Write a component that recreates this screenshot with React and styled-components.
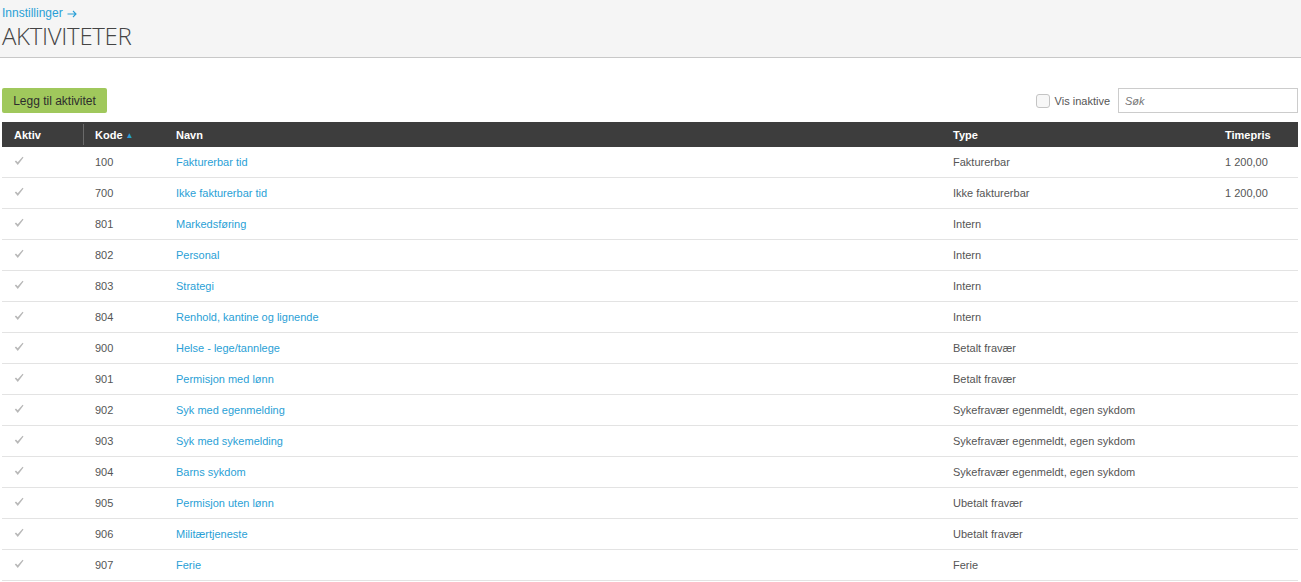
import React from "react";
import styled, { createGlobalStyle } from "styled-components";

const GlobalStyle = createGlobalStyle`
  body {
    margin: 0;
    background: #fff;
    font-family: "Liberation Sans", Arial, sans-serif;
    color: #555;
  }
`;

const Header = styled.div`
  background-color: #f5f5f5;
  border-bottom: 1px solid #c8c8c8;
  height: 58px;
  padding: 0 2px;
  box-sizing: border-box;
`;

const Breadcrumb = styled.a`
  display: flex;
  align-items: center;
  gap: 4px;
  padding-top: 6px;
  font-size: 12px;
  line-height: 15px;
  color: #2a9fd6;
  text-decoration: none;
`;

const Title = styled.h1`
  margin: 0;
  font-family: "Open Sans", sans-serif;
  font-weight: 300;
  font-size: 24px;
  line-height: 30px;
  color: #444;
  letter-spacing: -0.3px;
`;

const Content = styled.div`
  padding: 30px 3px 0 2px;
`;

const Toolbar = styled.div`
  display: flex;
  align-items: center;
  justify-content: space-between;
  height: 25px;
  margin-bottom: 9px;
`;

const AddButton = styled.button`
  height: 25px;
  width: 105px;
  border: none;
  border-radius: 2px;
  background-color: #a0c85c;
  color: #2d2d2d;
  font-family: "Liberation Sans", Arial, sans-serif;
  font-size: 12px;
  cursor: pointer;
  padding: 0;
`;

const RightTools = styled.div`
  display: flex;
  align-items: center;
`;

const CheckLabel = styled.label`
  display: flex;
  align-items: center;
  font-size: 11px;
  color: #555;
  margin-right: 8px;
`;

const Box = styled.span`
  width: 12px;
  height: 12px;
  border: 1px solid #c4c4c4;
  border-radius: 3px;
  background: #f7f7f7;
  margin-right: 5px;
`;

const Search = styled.input`
  width: 180px;
  height: 25px;
  box-sizing: border-box;
  border: 1px solid #ccc;
  padding: 0 6px;
  font-family: "Liberation Sans", Arial, sans-serif;
  font-size: 11px;
  outline: none;
  &::placeholder {
    color: #777;
    font-style: italic;
  }
`;

const Table = styled.table`
  width: 100%;
  border-collapse: collapse;
  table-layout: fixed;
`;

const Th = styled.th`
  box-sizing: border-box;
  background-color: #3d3d3d;
  color: #fff;
  font-size: 11px;
  font-weight: bold;
  text-align: left;
  height: 25px;
  padding: 0 0 0 12px;
  width: ${(p) => p.w || "auto"};
  position: relative;
  & + &::before {
    content: "";
    position: absolute;
    left: 0;
    top: 2px;
    bottom: 2px;
    border-left: 1px solid #6a6a6a;
  }
`;

const SortArrow = styled.span`
  color: #2a9fd6;
  font-size: 8px;
  margin-left: 3px;
  vertical-align: 1px;
`;

const Td = styled.td`
  font-size: 11px;
  height: 30px;
  padding: 0 0 0 12px;
  border-bottom: 1px solid #e3e3e3;
  color: #555;
`;

const Link = styled.a`
  color: #2a9fd6;
  text-decoration: none;
`;

const Arrow = () => (
  <svg width="10" height="8" viewBox="0 0 10 8">
    <path d="M0.5 4 H9 M6 1 L9 4 L6 7" fill="none" stroke="#2a9fd6" strokeWidth="1.1" />
  </svg>
);

const Check = () => (
  <svg width="10" height="10" viewBox="0 0 10 10" style={{ display: "block", marginTop: -3 }}>
    <path d="M0.8 5.4 L2 4.4 L3.7 6.3 L8.6 0.8 L9.5 1.6 L3.8 8.9 Z" fill="#b8b8b8" />
  </svg>
);

const rows = [
  ["100", "Fakturerbar tid", "Fakturerbar", "1 200,00"],
  ["700", "Ikke fakturerbar tid", "Ikke fakturerbar", "1 200,00"],
  ["801", "Markedsføring", "Intern", ""],
  ["802", "Personal", "Intern", ""],
  ["803", "Strategi", "Intern", ""],
  ["804", "Renhold, kantine og lignende", "Intern", ""],
  ["900", "Helse - lege/tannlege", "Betalt fravær", ""],
  ["901", "Permisjon med lønn", "Betalt fravær", ""],
  ["902", "Syk med egenmelding", "Sykefravær egenmeldt, egen sykdom", ""],
  ["903", "Syk med sykemelding", "Sykefravær egenmeldt, egen sykdom", ""],
  ["904", "Barns sykdom", "Sykefravær egenmeldt, egen sykdom", ""],
  ["905", "Permisjon uten lønn", "Ubetalt fravær", ""],
  ["906", "Militærtjeneste", "Ubetalt fravær", ""],
  ["907", "Ferie", "Ferie", ""],
];

const App = () => {
  return (
    <>
      <GlobalStyle />
      <Header>
        <Breadcrumb href="#">
          Innstillinger
          <Arrow />
        </Breadcrumb>
        <Title>AKTIVITETER</Title>
      </Header>
      <Content>
        <Toolbar>
          <AddButton>Legg til aktivitet</AddButton>
          <RightTools>
            <CheckLabel>
              <Box />
              Vis inaktive
            </CheckLabel>
            <Search placeholder="Søk" />
          </RightTools>
        </Toolbar>
        <Table>
          <thead>
            <tr>
              <Th w="81px">Aktiv</Th>
              <Th w="81px">
                Kode<SortArrow>▲</SortArrow>
              </Th>
              <Th>Navn</Th>
              <Th w="272px">Type</Th>
              <Th w="85px">Timepris</Th>
            </tr>
          </thead>
          <tbody>
            {rows.map(([code, name, type, price]) => (
              <tr key={code}>
                <Td>
                  <Check />
                </Td>
                <Td>{code}</Td>
                <Td>
                  <Link href="#">{name}</Link>
                </Td>
                <Td>{type}</Td>
                <Td>{price}</Td>
              </tr>
            ))}
          </tbody>
        </Table>
      </Content>
    </>
  );
};

export default App;
